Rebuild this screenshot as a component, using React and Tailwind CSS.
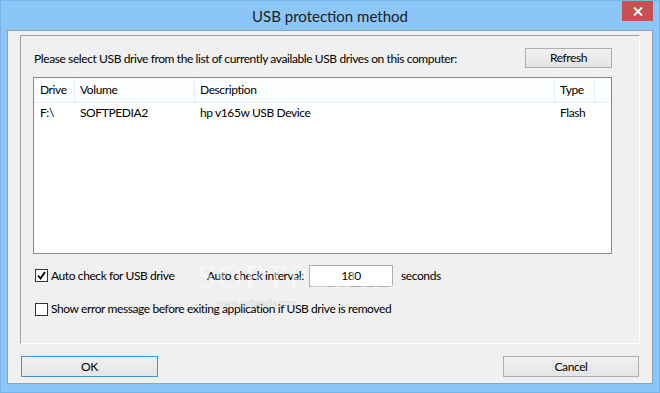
export default function App() {
  const font = { fontFamily: 'Lato, "Noto Sans", sans-serif' };
  return (
    <div
      className="w-[660px] h-[393px] bg-[#8cc6f8] border border-[#79b4ec] flex flex-col text-[12px] tracking-[-0.4px] text-[#000] relative overflow-hidden whitespace-nowrap"
      style={font}
    >
      {/* Title bar */}
      <div className="h-[29px] flex items-center justify-center relative shrink-0">
        <span className="text-[15px] tracking-normal text-[#202020] leading-none mt-[1px]">USB protection method</span>
        <div className="absolute right-[6px] top-0 w-[31px] h-[20px] bg-[#c75050] flex items-center justify-center">
          <svg width="10" height="9" viewBox="0 0 10 9">
            <path d="M1 0.5 L9 8.5 M9 0.5 L1 8.5" stroke="#fff" strokeWidth="2" />
          </svg>
        </div>
      </div>
      {/* Client area */}
      <div className="mx-[6px] h-[354px] border border-[#8ca3bd] bg-[#f0f0f0] flex flex-col px-[12px] pt-[4px]">
        {/* group panel */}
        <div className="h-[309px] border-t border-l border-[#a0a0a0] border-b border-r border-b-white border-r-white flex flex-col pl-[12px] pr-[27px]">
          <div className="flex items-center justify-between mt-[12px] h-[20px]">
            <span className="ml-[1px] mt-[1px]">Please select USB drive from the list of currently available USB drives on this computer:</span>
            <button className="w-[87px] h-[20px] border border-[#adadad] bg-gradient-to-b from-[#f2f2f2] to-[#e3e3e3] leading-none">
              Refresh
            </button>
          </div>
          <div className="mt-[9px] h-[177px] border border-[#828790] bg-white flex flex-col">
            <div className="h-[25px] flex border-b border-[#e5eefa] bg-[#fcfdfe]">
              <div className="w-[41px] pl-[6px] flex items-center border-r border-[#e2ecf8]">Drive</div>
              <div className="w-[120px] pl-[5px] flex items-center border-r border-[#e2ecf8]">Volume</div>
              <div className="w-[360px] pl-[5px] flex items-center border-r border-[#e2ecf8]">Description</div>
              <div className="w-[40px] pl-[5px] flex items-center border-r border-[#e2ecf8]">Type</div>
            </div>
            <div className="h-[19px] flex items-center">
              <div className="w-[41px] pl-[6px]">F:\</div>
              <div className="w-[120px] pl-[5px]">SOFTPEDIA2</div>
              <div className="w-[360px] pl-[5px]">hp v165w USB Device</div>
              <div className="w-[40px] pl-[5px]">Flash</div>
            </div>
          </div>
          <div className="mt-[11px] h-[22px] flex items-center">
            <div className="w-[13px] h-[13px] border border-[#333] bg-white flex items-center justify-center ml-[2px] mb-[1px]">
              <svg width="9" height="9" viewBox="0 0 9 9">
                <path d="M1 4.5 L3.5 7.5 L8 1" stroke="#000" strokeWidth="1.8" fill="none" />
              </svg>
            </div>
            <span className="ml-[3px] w-[156px]">Auto check for USB drive</span>
            <span className="w-[102px]">Auto check interval:</span>
            <div className="w-[84px] h-[22px] border border-[#abadb3] bg-white flex items-center justify-center">180</div>
            <span className="ml-[8px]">seconds</span>
          </div>
          <div className="mt-[15px] h-[14px] flex items-center">
            <div className="w-[13px] h-[13px] border border-[#333] bg-white ml-[2px]" />
            <span className="ml-[3px]">Show error message before exiting application if USB drive is removed</span>
          </div>
        </div>
        {/* bottom buttons */}
        <div className="flex justify-between mt-[12px] pl-[1px] pr-[1px]">
          <button className="w-[137px] h-[21px] border border-[#3c96e6] bg-gradient-to-b from-[#f0f0f0] to-[#e5e5e5] leading-none">OK</button>
          <button className="w-[136px] h-[21px] border border-[#adadad] bg-gradient-to-b from-[#f0f0f0] to-[#e5e5e5] leading-none">Cancel</button>
        </div>
      </div>
      {/* watermark */}
      <div
        className="absolute left-[196px] top-[259px] text-[34px] leading-none tracking-[2px] text-white/50 pointer-events-none"
        style={{ fontFamily: '"Liberation Serif", serif' }}
      >
        SOFTPEDIA
      </div>
      <div className="absolute left-[216px] top-[297px] text-[9px] tracking-normal leading-none text-[#c8c8c8]/60 pointer-events-none">
        www.softpedia.com
      </div>
    </div>
  );
}
